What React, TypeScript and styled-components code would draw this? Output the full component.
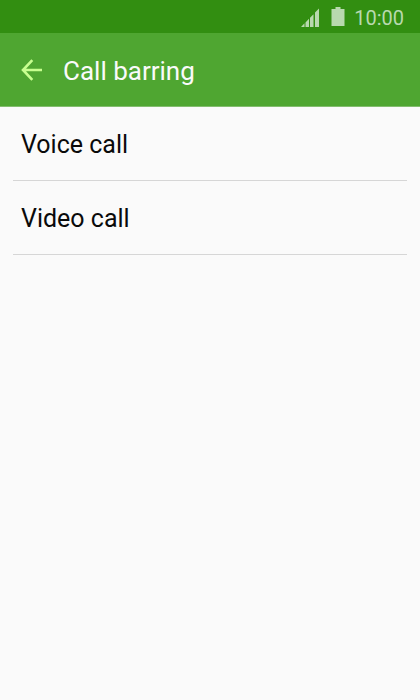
import React from "react";
import styled, { createGlobalStyle } from "styled-components";

const GlobalStyle = createGlobalStyle`
  *, *::before, *::after { box-sizing: border-box; }
  body {
    margin: 0;
    background: #fafafa;
    font-family: Roboto, "Noto Sans", sans-serif;
  }
`;

const Screen = styled.div`
  display: flex;
  flex-direction: column;
  min-height: 100vh;
  background: #fafafa;
`;

const StatusBar = styled.div`
  display: flex;
  align-items: center;
  justify-content: flex-end;
  height: 33px;
  padding: 2px 16px 0 0;
  background: #328e11;
  color: #b8d9ae;
`;

const SignalIcon = styled.svg`
  display: block;
  width: 20px;
  height: 22px;
  margin-right: 11px;
`;

const BatteryIcon = styled.svg`
  display: block;
  width: 14px;
  height: 22px;
  margin-right: 9px;
`;

const Clock = styled.time`
  font-size: 20px;
  line-height: 26px;
`;

const Header = styled.header`
  display: flex;
  align-items: center;
  height: 74px;
  padding: 0 20px;
  gap: 20px;
  background: #4fa631;
  border-bottom: 1px solid #83bd6f;
`;

const BackButton = styled.button`
  display: block;
  padding: 0;
  border: 0;
  background: none;
  color: #c8ff90;
  cursor: pointer;

  svg {
    display: block;
    width: 23px;
    height: 24px;
  }
`;

const Title = styled.h1`
  margin: 0;
  padding-top: 2px;
  font-size: 26px;
  line-height: 32px;
  font-weight: 400;
  color: #fafafa;
`;

const List = styled.ul`
  margin: 0;
  padding: 0 13px;
  list-style: none;
`;

const Row = styled.li`
  border-bottom: 1px solid #d6d6d6;
`;

const RowButton = styled.button`
  display: block;
  width: 100%;
  height: 73px;
  padding: 2px 8px 0;
  border: 0;
  background: none;
  font-family: inherit;
  font-size: 25px;
  line-height: 32px;
  text-align: left;
  color: #0a0a0a;
  cursor: pointer;
`;

const options = ["Voice call", "Video call"];

export default function App() {
  return (
    <Screen>
      <GlobalStyle />
      <StatusBar>
        <SignalIcon viewBox="0 -1 20 22" fill="currentColor" aria-hidden="true">
          <path d="M1 19L4.5 15.3V19ZM5.5 14.4L9 10.8V19H5.5ZM10 9.8L13.5 6.2V19H10ZM15 4.6L19 0.6V19H15Z" />
        </SignalIcon>
        <BatteryIcon viewBox="0 -1 14 22" fill="currentColor" aria-hidden="true">
          <path d="M4.5 -1H9.5V1H13.5V18H0.5V1H4.5Z" />
        </BatteryIcon>
        <Clock>10:00</Clock>
      </StatusBar>
      <Header>
        <BackButton type="button" aria-label="Back">
          <svg viewBox="0 0 23 24" fill="none" stroke="currentColor" strokeWidth="2.6">
            <path d="M22 12H3M12.3 2.2L3 12L12.3 21.8" />
          </svg>
        </BackButton>
        <Title>Call barring</Title>
      </Header>
      <main>
        <List>
          {options.map((label) => (
            <Row key={label}>
              <RowButton type="button">{label}</RowButton>
            </Row>
          ))}
        </List>
      </main>
    </Screen>
  );
}
